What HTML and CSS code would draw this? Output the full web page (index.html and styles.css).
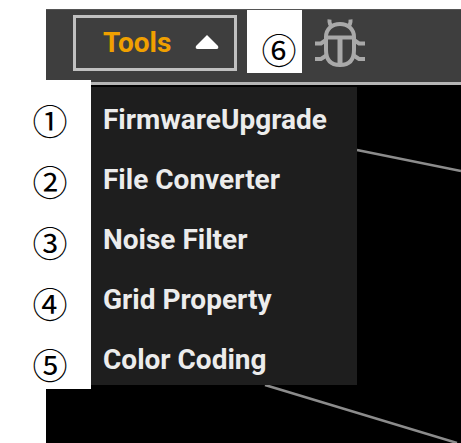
FILE: index.html
```html
<!DOCTYPE html>
<html lang="en">
<head>
    <meta charset="UTF-8">
    <meta name="viewport" content="width=device-width, initial-scale=1.0">
    <title>Tools Menu</title>
    <link rel="stylesheet" href="styles.css">
</head>
<body>
    <div class="window">
        <!-- Toolbar -->
        <header class="toolbar">
            <button class="tools-button" type="button" aria-expanded="true">
                Tools
                <svg class="arrow" viewBox="0 0 24 16" aria-hidden="true">
                    <path d="M12 1L23 12Q24 15 21.500 15H2.500Q0 15 1 12Z" fill="#fff"/>
                </svg>
            </button>
            <span class="callout">⑥</span>
            <button class="bug-button" type="button" aria-label="Debug">
                <svg class="bug" viewBox="0 0 52 50" fill="none" stroke="#a9a9a9" stroke-width="4" aria-hidden="true">
                    <path d="M15.500 1.500Q15 7 18.500 8.500M36.500 1.500Q37 7 33.500 8.500"/>
                    <path d="M12 19C12 11 18 6 26 6S40 11 40 19V32C40 42 35 47 26 47S12 42 12 32Z"/>
                    <path d="M12 19.500H40"/>
                    <path d="M26 20V47" stroke-width="5"/>
                    <path d="M1 25.500H7L12 22M1 41H7L13 37M51 25.500H45L40 22M51 41H45L39 37"/>
                </svg>
            </button>
        </header>

        <!-- Viewport with the open menu -->
        <main class="viewport">
            <svg class="lines" width="415" height="358" stroke="#8c8c8c" stroke-width="2.500" aria-hidden="true">
                <path d="M311 65L415 86M219 300L411 358"/>
            </svg>
            <div class="labels">
                <span>①</span>
                <span>②</span>
                <span>③</span>
                <span>④</span>
                <span>⑤</span>
            </div>
            <nav class="menu">
                <button type="button">FirmwareUpgrade</button>
                <button type="button">File Converter</button>
                <button type="button">Noise Filter</button>
                <button type="button">Grid Property</button>
                <button type="button">Color Coding</button>
            </nav>
        </main>
    </div>
</body>
</html>
```

FILE: styles.css
```css
* {
    box-sizing: border-box;
}
body {
    margin: 0;
    padding: 9px 0 0 46px;
    min-height: 100vh;
    display: flex;
    background: #fff;
    font-family: Roboto, sans-serif;
}
button {
    margin: 0;
    border: none;
    background: none;
    font-family: inherit;
    font-size: 28px;
    font-weight: 700;
    cursor: pointer;
}
.window {
    flex: 1;
    min-width: 0;
    display: flex;
    flex-direction: column;
    background: #000;
}
.toolbar {
    display: flex;
    align-items: flex-start;
    height: 76px;
    padding-left: 27px;
    background: #3e3e3e;
    border-top: 1px solid #555;
    border-bottom: 3px solid #b5b5b5;
}
.tools-button {
    display: flex;
    align-items: center;
    gap: 24px;
    width: 164px;
    height: 56px;
    margin-top: 5px;
    padding: 0 0 2px 27px;
    border: 3px solid #c0c0c0;
    color: #f0a000;
}
.arrow {
    width: 24px;
    height: 16px;
}
.callout {
    width: 55px;
    height: 63px;
    margin-left: 10px;
    padding: 15px 0 0 9px;
    background: #fff;
    color: #000;
    font: 35px/48px "Noto Sans CJK JP", sans-serif;
    text-align: center;
}
.bug-button {
    margin: 8px 0 0 12px;
    padding: 0;
}
.bug {
    display: block;
    width: 52px;
    height: 50px;
}
.viewport {
    position: relative;
    flex: 1;
    display: flex;
    align-items: flex-start;
}
.lines {
    position: absolute;
    top: 0;
    left: 0;
}
.labels {
    position: relative;
    display: grid;
    grid-auto-rows: 61px;
    width: 72px;
    margin: -5px 0 0 -27px;
    padding: 9px 10px 0 0;
    height: 309px;
    background: #fff;
    color: #000;
    font: 35px/61px "Noto Sans CJK JP", sans-serif;
    text-align: center;
}
.menu {
    position: relative;
    display: flex;
    flex-direction: column;
    gap: 12px;
    width: 266px;
    padding: 8px 0 2px;
    margin-top: 2px;
    background: #1e1e1e;
}
.menu button {
    height: 48px;
    padding: 0 12px;
    color: #ececec;
    text-align: left;
    white-space: nowrap;
}
```
